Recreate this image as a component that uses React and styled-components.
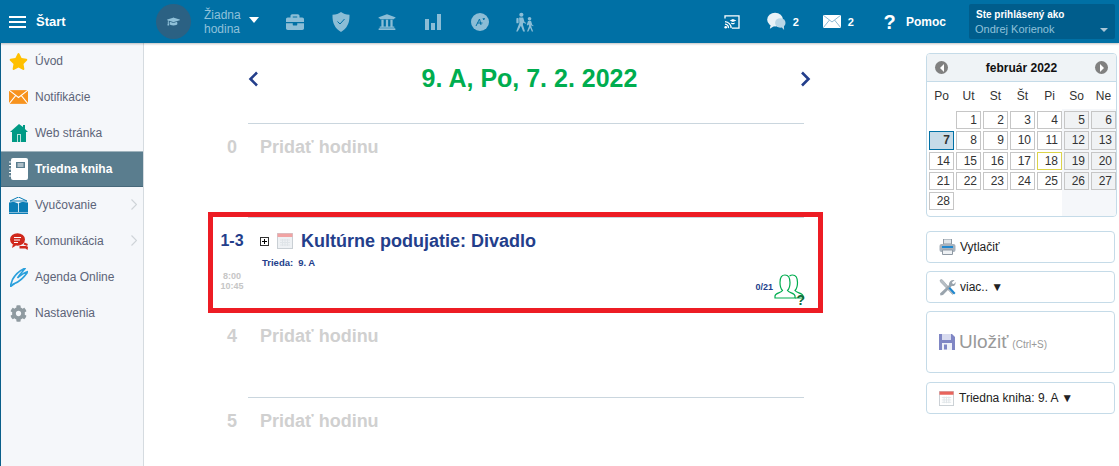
import React from "react"
import styled, { createGlobalStyle } from "styled-components"
import {
  FaStar,
  FaGraduationCap,
  FaBriefcase,
  FaUniversity,
  FaCog,
} from "react-icons/fa"

const GlobalStyle = createGlobalStyle`
  html, body { margin: 0; padding: 0; background: #fff; }
  body { font-family: "Liberation Sans", Arial, sans-serif; }
  * { box-sizing: border-box; }
`

const Page = styled.div`
  width: 1119px;
  height: 466px;
  overflow: hidden;
  display: flex;
  flex-direction: column;
`

/* top bar */
const TopBar = styled.header`
  flex: 0 0 43px;
  display: flex;
  align-items: center;
  background: #0070a5;
  box-shadow: 0 1px 2px rgba(0, 0, 0, 0.25);
  position: relative;
  z-index: 2;
`
const StartBlock = styled.div`
  width: 156px;
  padding-left: 9px;
  display: flex;
  align-items: center;
  gap: 10px;
  color: #fff;
  font-size: 13px;
  font-weight: bold;
`
const Burger = styled.span`
  width: 17px;
  height: 12px;
  border-top: 2px solid #fff;
  border-bottom: 2px solid #fff;
  position: relative;
  &::after {
    content: "";
    position: absolute;
    left: 0;
    right: 0;
    top: 3px;
    height: 2px;
    background: #fff;
  }
`
const CapCircle = styled.div`
  width: 35px;
  height: 35px;
  border-radius: 50%;
  background: #2b6183;
  color: #8fc0d8;
  display: flex;
  align-items: center;
  justify-content: center;
  font-size: 13px;
`
const NoLesson = styled.div`
  margin-left: 13px;
  width: 45px;
  color: #8fc1da;
  font-size: 12px;
  line-height: 14px;
`
const DownArrow = styled.span`
  width: 0;
  height: 0;
  border-left: 5px solid transparent;
  border-right: 5px solid transparent;
  border-top: 6px solid #fff;
  margin-bottom: 4px;
`
const ModuleIcons = styled.div`
  margin-left: 18px;
  display: flex;
  align-items: center;
  color: #8bbdd6;
`
const ModuleIcon = styled.span`
  width: ${p => p.$w}px;
  display: flex;
  justify-content: center;
  font-size: 18px;
`
const RightTools = styled.div`
  margin-left: auto;
  display: flex;
  align-items: center;
  color: #fff;
  font-size: 11px;
  font-weight: bold;
`
const Tool = styled.span`
  display: flex;
  align-items: center;
  gap: ${p => p.$gap || 7}px;
  margin-right: ${p => p.$mr || 0}px;
`
const HelpMark = styled.span`
  font-size: 20px;
  line-height: 20px;
  width: 9px;
  display: flex;
  justify-content: center;
`
const HelpLabel = styled.span`
  font-size: 12px;
`
const UserBox = styled.div`
  width: 146px;
  height: 35px;
  margin-right: 4px;
  padding: 5px 6px 0 7px;
  background: #005d8c;
  border-radius: 2px;
  position: relative;
`
const UserHint = styled.div`
  color: #fff;
  font-size: 10px;
  line-height: 12px;
`
const UserName = styled.div`
  margin: 2px 0 0 -1px;
  color: #8fc1da;
  font-size: 11px;
  font-weight: normal;
  line-height: 13px;
`
const UserCaret = styled.span`
  position: absolute;
  right: 7px;
  bottom: 7px;
  border-left: 4px solid transparent;
  border-right: 4px solid transparent;
  border-top: 4px solid #a9c6d6;
`

/* sidebar */
const Body = styled.div`
  flex: 1;
  display: flex;
  min-height: 0;
`
const Sidebar = styled.nav`
  width: 144px;
  background: #f5f7fa;
  border-left: 1px solid #0a5f8a;
  border-right: 1px solid #d5dbe0;
`
const NavItem = styled.div`
  height: 36px;
  display: flex;
  align-items: center;
  position: relative;
  padding-left: 8px;
  gap: 7px;
  font-size: 12px;
  color: ${p => (p.$active ? "#fff" : "#5c6478")};
  font-weight: ${p => (p.$active ? "bold" : "normal")};
  background: ${p => (p.$active ? "#5a7d8e" : "transparent")};
  ${p => p.$active && "border-top: 1px solid #9fb3bd; border-bottom: 1px solid #47687a;"}
`
const NavIconBox = styled.span`
  width: 19px;
  height: 20px;
  display: flex;
  align-items: center;
  justify-content: center;
  font-size: ${p => p.$size || 19}px;
  color: ${p => p.$color || "inherit"};
`
const NavChevron = styled.svg`
  position: absolute;
  right: 6px;
  top: 12px;
`

/* middle column */
const Main = styled.main`
  flex: 0 0 782px;
  padding-left: 72px;
  position: relative;
`
const DayHeader = styled.div`
  height: 80px;
  width: 595px;
  padding: 0 0 9px 32px;
  display: flex;
  align-items: center;
  justify-content: space-between;
`
const DayTitle = styled.h1`
  margin: 0;
  color: #00ad4f;
  font-size: 25px;
  font-weight: bold;
`
const LessonRow = styled.section`
  display: grid;
  grid-template-columns: 32px 556px;
  height: ${p => p.$h}px;
`
const LessonNumber = styled.div`
  padding-top: 15px;
  text-align: center;
  font-size: ${p => (p.$filled ? 16 : 18)}px;
  font-weight: bold;
  line-height: 18px;
  color: ${p => (p.$filled ? "#233e8b" : "#d0d0d0")};
  white-space: nowrap;
`
const LessonTimes = styled.div`
  margin-top: 21px;
  color: #c6c6c6;
  font-size: 9px;
  line-height: 10px;
`
const LessonBody = styled.div`
  border-top: 1px solid #cad6de;
  padding: 13px 0 0 12px;
  position: relative;
`
const AddLesson = styled.div`
  margin-top: 1px;
  color: #d0d0d0;
  font-size: 18px;
  font-weight: bold;
  line-height: 18px;
`
const LessonTitleRow = styled.div`
  display: flex;
  align-items: center;
  height: 20px;
`
const PlusBox = styled.span`
  width: 9px;
  height: 9px;
  margin-right: 8px;
  border: 1px solid #333;
  position: relative;
  &::before,
  &::after {
    content: "";
    position: absolute;
    background: #000;
  }
  &::before { left: 1px; right: 1px; top: 3px; height: 1px; }
  &::after { top: 1px; bottom: 1px; left: 3px; width: 1px; }
`
const LessonTitle = styled.h2`
  margin: 0 0 0 8px;
  color: #233e8b;
  font-size: 18px;
  font-weight: bold;
`
const LessonClass = styled.div`
  margin: 6px 0 0 2px;
  display: flex;
  gap: 5px;
  color: #233e8b;
  font-size: 9.500px;
  font-weight: bold;
  line-height: 12px;
`
const Attendance = styled.div`
  position: absolute;
  right: -1px;
  top: 56px;
  display: flex;
  align-items: center;
  gap: 1px;
  color: #233e8b;
  font-size: 9px;
  font-weight: bold;
`
const UsersWrap = styled.span`
  position: relative;
  display: flex;
`
const UnknownMark = styled.span`
  position: absolute;
  right: 0;
  bottom: -7px;
  color: #0f6b3a;
  font-size: 14px;
  font-weight: bold;
  line-height: 14px;
`
const RedFrame = styled.div`
  position: absolute;
  left: 64px;
  top: 169px;
  width: 615px;
  height: 101px;
  border: 5px solid #ed1c24;
  pointer-events: none;
`

/* right column */
const Aside = styled.aside`
  width: 193px;
  padding-top: 10px;
`
const Calendar = styled.div`
  width: 191px;
  height: 164px;
  border: 1px solid #c5dbe8;
  border-radius: 4px;
  overflow: hidden;
`
const CalendarHead = styled.div`
  height: 28px;
  padding: 0 8px;
  display: flex;
  align-items: center;
  justify-content: space-between;
  background: #eff3f6;
  border-bottom: 1px solid #c5dbe8;
  color: #111;
  font-size: 12px;
  font-weight: bold;
`
const CalendarNav = styled.span`
  width: 13px;
  height: 13px;
  border-radius: 50%;
  background: #808080;
  display: flex;
  align-items: center;
  justify-content: center;
`
const CalendarBody = styled.div`
  position: relative;
  padding-left: 2px;
`
const WeekendBand = styled.div`
  position: absolute;
  left: 135px;
  right: 0;
  top: 27px;
  height: 110px;
  background: #f5f7fa;
`
const DayNames = styled.div`
  height: 29px;
  padding-bottom: 2px;
  display: grid;
  grid-template-columns: repeat(7, 25px);
  column-gap: 2px;
  align-items: center;
  text-align: center;
  font-size: 12px;
  color: #333;
  position: relative;
`
const DayGrid = styled.div`
  display: grid;
  grid-template-columns: repeat(7, 25px);
  grid-auto-rows: 18.300px;
  gap: 2px;
  position: relative;
`
const DayCell = styled.div`
  grid-column: ${p => p.$col || "auto"};
  border: 1px solid ${p => (p.$today ? "#0070a5" : p.$mark ? "#dcd44a" : "#c6c6c6")};
  background: ${p => (p.$today ? "#c6dbe8" : p.$weekend ? "#f0f2f4" : "#fff")};
  color: #333;
  font-size: 12px;
  font-weight: ${p => (p.$today ? "bold" : "normal")};
  line-height: 16px;
  text-align: right;
  padding-right: 3px;
`
const ActionButton = styled.div`
  width: 189px;
  height: ${p => p.$h || 32}px;
  margin-top: ${p => p.$mt || 8}px;
  padding-left: 12px;
  display: flex;
  align-items: center;
  gap: ${p => p.$gap || 4}px;
  border: 1px solid #c5dbe8;
  border-radius: 4px;
  color: #222;
  font-size: 12px;
  white-space: nowrap;
`
const SaveLabel = styled.span`
  color: #999;
  font-size: 19px;
`
const SaveHint = styled.span`
  color: #999;
  font-size: 10px;
  margin-left: 4px;
`

const CalendarIcon = ({ size = 16, faded }) => (
  <svg width={size} height={size} viewBox="0 0 16 16">
    <rect x="0.5" y="0.5" width="15" height="15" fill={faded ? "#eef1f4" : "#fff"} stroke="#c9cfd4" />
    <rect x="0.5" y="0.5" width="15" height="3.5" fill={faded ? "#f1a3a3" : "#e8645c"} />
    <path d="M3 7h10M3 9.5h10M3 12h10M5.5 6v7M8 6v7M10.5 6v7" stroke="#dfe4e8" strokeWidth="1" />
  </svg>
)

const ShieldIcon = () => (
  <svg width="18" height="20" viewBox="0 0 18 20">
    <path d="M9 0c2 1.600 5 2.600 8.500 2.800C17.800 11 15 16.500 9 20 3 16.500.2 11 .5 2.800 4 2.600 7 1.600 9 0z" fill="currentColor" />
    <path d="M5.500 9.500l2.500 2.500 4.500-5" fill="none" stroke="#0070a5" strokeWidth="1" />
  </svg>
)

const BarsIcon = () => (
  <svg width="16" height="16" viewBox="0 0 16 16" fill="currentColor">
    <rect x="0" y="5" width="4" height="11" />
    <rect x="6" y="9" width="4" height="7" />
    <rect x="12" y="0" width="4" height="16" />
  </svg>
)

const BadgeIcon = () => (
  <svg width="18" height="18" viewBox="0 0 18 18">
    <circle cx="9" cy="9" r="9" fill="currentColor" />
    <path d="M5 13l3.500-7 1.500 6M6.500 10h5M12 5l1 2M14 5.500l-2 1" fill="none" stroke="#0070a5" strokeWidth="1" />
  </svg>
)

const WalkersIcon = () => (
  <svg width="20" height="20" viewBox="0 0 22 21" fill="currentColor">
    <circle cx="7" cy="2.500" r="2.300" />
    <path d="M4.500 5.500h4.500l1.500 5 2 1-.5 1-3-1.200-.3 2.200 2.300 7.500H9l-2.500-6.500L3 21H1.300L4.800 11.500z" />
    <rect x="1.500" y="6" width="2.500" height="6" rx="1" />
    <circle cx="16" cy="7" r="2" />
    <path d="M14.300 9.500h3.400l1.300 4 1.500 1-.6.800-2-1.200.2 2 1.900 4.900h-1.500l-1.800-4.200-2 4.200h-1.500l2.300-6-.6-1.800-1.300 1.200-.7-.6z" />
  </svg>
)

const CastIcon = () => (
  <svg width="18" height="14" viewBox="0 0 18 16">
    <path d="M1 4V1h16v14H9" fill="none" stroke="#fff" strokeWidth="1.500" />
    <path d="M1 7.500a7.500 7.500 0 0 1 7 7.500M1 10.500a4.500 4.500 0 0 1 4 4.500" fill="none" stroke="#fff" strokeWidth="1.500" />
    <circle cx="1.800" cy="14" r="1.500" fill="#fff" />
    <path d="M10 4.500l4 1.700-4 1.700-3.500-1.700zM8 8.500c1.300 1 2.700 1 4 0v1.500c-1.300.8-2.700.8-4 0z" fill="#fff" />
  </svg>
)

const BubblesIcon = () => (
  <svg width="19" height="20" viewBox="0 0 20 20">
    <ellipse cx="8.500" cy="7.500" rx="8.300" ry="7.300" fill="#e9f2f7" />
    <path d="M4 12l-1 5 5-3z" fill="#e9f2f7" />
    <ellipse cx="14" cy="11" rx="5.500" ry="5" fill="#b9d6e6" />
    <path d="M15 15l3 3.500-.2-5z" fill="#b9d6e6" />
  </svg>
)

const MailIcon = ({ bg, line, w = 18, h = 13 }) => (
  <svg width={w} height={h} viewBox="0 0 18 13">
    <rect width="18" height="13" fill={bg} />
    <path d="M0 0l9 7 9-7M0 13l6.500-8M18 13l-6.500-8" fill="none" stroke={line} strokeWidth="1" />
  </svg>
)

const HouseIcon = () => (
  <svg width="18" height="18" viewBox="0 0 18 18">
    <path d="M9 0l4 3V1h2v4l3 3h-2v10H2V8H0z" fill="#009a85" />
    <rect x="7" y="10" width="4" height="8" fill="#b9e3dc" />
    <rect x="8" y="11" width="2" height="7" fill="#009a85" />
  </svg>
)

const NotebookIcon = () => (
  <svg width="19" height="22" viewBox="0 0 19 22">
    <rect x="2" y="0" width="17" height="22" rx="2" fill="#fff" />
    <rect x="7" y="4" width="9" height="6" fill="#5a7d8e" />
    <path d="M8.500 6h6M8.500 8h6" stroke="#fff" strokeWidth="1" />
    <path d="M0 4h3M0 7.500h3M0 11h3M0 14.500h3M0 18h3" stroke="#fff" strokeWidth="1.200" />
  </svg>
)

const BookIcon = () => (
  <svg width="19" height="17" viewBox="0 0 19 17">
    <path d="M9.500 0L18 4H1z" fill="none" stroke="#0b7db5" strokeWidth="1" />
    <path d="M0 5.500c3.500-1 7-.5 9 1 2-1.500 5.500-2 10-1V15H0z" fill="#0b7db5" />
    <rect x="9" y="6" width="1" height="9" fill="#cfe6f2" />
    <rect x="0" y="15.500" width="19" height="1.500" fill="#0b7db5" />
  </svg>
)

const ChatIcon = () => (
  <svg width="18" height="17" viewBox="0 0 18 17">
    <ellipse cx="7.500" cy="6.500" rx="7.500" ry="6.200" fill="#d0281c" />
    <path d="M3 11l-1 4 4-2.500z" fill="#d0281c" />
    <path d="M4 4.500h7M4 7h6M4 9.500h4" stroke="#fff" strokeWidth="1" />
    <path d="M9.500 13h6.500c1.500 0 2 1 2 1.500l-.5 2.500-2-1.500H9.500z" fill="#d0281c" />
    <path d="M14 10.500l3.500 1.500" stroke="#d0281c" strokeWidth="2" />
  </svg>
)

const PenIcon = () => (
  <svg width="18" height="19" viewBox="0 0 18 19">
    <path d="M0 19l2.500-7.500C5 7 9.500 2.500 15.500 0 13.500 2.500 10 6 7.500 10 10.500 7.500 14 4.500 18 3.500 15 8 10 13.500 4.500 15.500z" fill="none" stroke="#2ba0dc" strokeWidth="1.600" />
    <path d="M0 19l3-4 2 1z" fill="#2ba0dc" />
  </svg>
)

const UsersIcon = () => (
  <svg width="31" height="26" viewBox="0 0 31 26">
    <path d="M1 22c0-3 6-3 7.500-5.500C7 15 6 12 6 8.500 6 3 8 1 11 1s5 2 5 7.500c0 3.500-1 6.500-2.500 8C15 19 21 19 21 22v2H1z" fill="#fff" stroke="#00ad4f" strokeWidth="1.200" />
    <path d="M15.500 2c1-.7 2-1 3-1 3 0 5 2 5 7.500 0 3.500-1 6.500-2.500 8 1.500 2.500 8 2.500 8 5.500v2h-8" fill="none" stroke="#00ad4f" strokeWidth="1.200" />
  </svg>
)

const PrinterIcon = () => (
  <svg width="17" height="16" viewBox="0 0 17 16">
    <path d="M4.500 0h8v5h-8z" fill="#dfe4e8" stroke="#8f99a3" />
    <rect x="0.500" y="5" width="16" height="8" rx="2" fill="#a8b2bc" />
    <rect x="3" y="7" width="11" height="2" fill="#1f88d0" />
    <path d="M3.500 11h10v4.500h-10z" fill="#eef1f4" stroke="#8f99a3" />
  </svg>
)

const ToolsIcon = () => (
  <svg width="17" height="17" viewBox="0 0 17 17">
    <path d="M1 1l2-.5 12 13.500-1.500 1.500L1.500 3z" fill="#b7bec4" stroke="#8f99a3" strokeWidth=".5" />
    <path d="M15.500 1.200l-2.500 2 .5 1.500 1.500.3 1.500-2c.6 2.500-1.200 4.500-3.700 4L4 16l-2.500.5L1 14.500 10 6c-.5-3 2.500-5.700 5.500-4.800z" fill="#9aa4ad" />
    <path d="M9.500 9.500l5.500 6 1.500-1.500-5.500-6z" fill="#1f88d0" />
  </svg>
)

const FloppyIcon = () => (
  <svg width="16" height="16" viewBox="0 0 16 16">
    <path d="M0 0h13l3 3v13H0z" fill="#7f86c4" />
    <rect x="3" y="0" width="9" height="6" fill="#d8dbef" />
    <rect x="3" y="9" width="10" height="7" fill="#eef0f8" />
    <rect x="5" y="10.500" width="3" height="5" fill="#7f86c4" />
  </svg>
)

const navItems = [
  { label: "Úvod", icon: <NavIconBox $color="#ffc000"><FaStar /></NavIconBox> },
  { label: "Notifikácie", icon: <NavIconBox><MailIcon bg="#f7931e" line="#fff" w={19} h={14} /></NavIconBox> },
  { label: "Web stránka", icon: <NavIconBox><HouseIcon /></NavIconBox> },
  { label: "Triedna kniha", icon: <NavIconBox><NotebookIcon /></NavIconBox>, active: true },
  { label: "Vyučovanie", icon: <NavIconBox><BookIcon /></NavIconBox>, more: true },
  { label: "Komunikácia", icon: <NavIconBox><ChatIcon /></NavIconBox>, more: true },
  { label: "Agenda Online", icon: <NavIconBox><PenIcon /></NavIconBox> },
  { label: "Nastavenia", icon: <NavIconBox $color="#8f9aa0" $size={17}><FaCog /></NavIconBox> },
]

const days = Array.from({ length: 28 }, (_, i) => i + 1)

const Chevron = ({ flip }) => (
  <svg width="11" height="16" viewBox="0 0 11 16">
    <path d={flip ? "M2 1.500L8.500 8 2 14.500" : "M9 1.500L2.500 8 9 14.500"} fill="none" stroke="#233e8b" strokeWidth="2.600" />
  </svg>
)

const MonthArrow = ({ flip }) => (
  <CalendarNav>
    <svg width="6" height="8" viewBox="0 0 6 8">
      <path d={flip ? "M1 0l4 4-4 4z" : "M5 0L1 4l4 4z"} fill="#fff" />
    </svg>
  </CalendarNav>
)

const EmptyLesson = ({ number, height }) => (
  <LessonRow $h={height}>
    <LessonNumber>{number}</LessonNumber>
    <LessonBody>
      <AddLesson>Pridať hodinu</AddLesson>
    </LessonBody>
  </LessonRow>
)

const App = () => (
  <Page>
    <GlobalStyle />
    <TopBar>
      <StartBlock>
        <Burger />
        Štart
      </StartBlock>
      <CapCircle>
        <FaGraduationCap />
      </CapCircle>
      <NoLesson>Žiadna hodina</NoLesson>
      <DownArrow />
      <ModuleIcons>
        <ModuleIcon $w={36}><FaBriefcase /></ModuleIcon>
        <ModuleIcon $w={56}><ShieldIcon /></ModuleIcon>
        <ModuleIcon $w={36}><FaUniversity /></ModuleIcon>
        <ModuleIcon $w={56}><BarsIcon /></ModuleIcon>
        <ModuleIcon $w={38}><BadgeIcon /></ModuleIcon>
        <ModuleIcon $w={52}><WalkersIcon /></ModuleIcon>
      </ModuleIcons>
      <RightTools>
        <Tool $mr={26}><CastIcon /></Tool>
        <Tool $mr={24}><BubblesIcon /> 2</Tool>
        <Tool $mr={31}><MailIcon bg="#fff" line="#8fb9d2" /> 2</Tool>
        <Tool $gap={12} $mr={23}>
          <HelpMark>?</HelpMark>
          <HelpLabel>Pomoc</HelpLabel>
        </Tool>
        <UserBox>
          <UserHint>Ste prihlásený ako</UserHint>
          <UserName>Ondrej Korienok</UserName>
          <UserCaret />
        </UserBox>
      </RightTools>
    </TopBar>
    <Body>
      <Sidebar>
        {navItems.map(item => (
          <NavItem key={item.label} $active={item.active}>
            {item.icon}
            {item.label}
            {item.more && (
              <NavChevron width="6" height="11" viewBox="0 0 6 11">
                <path d="M.5.500l5 5-5 5" fill="none" stroke="#cfd4d8" strokeWidth="1.200" />
              </NavChevron>
            )}
          </NavItem>
        ))}
      </Sidebar>
      <Main>
        <DayHeader>
          <Chevron />
          <DayTitle>9. A, Po, 7. 2. 2022</DayTitle>
          <Chevron flip />
        </DayHeader>
        <EmptyLesson number="0" height={94} />
        <LessonRow $h={95}>
          <LessonNumber $filled>
            1-3
            <LessonTimes>
              8:00
              <br />
              10:45
            </LessonTimes>
          </LessonNumber>
          <LessonBody>
            <LessonTitleRow>
              <PlusBox />
              <CalendarIcon faded />
              <LessonTitle>Kultúrne podujatie: Divadlo</LessonTitle>
            </LessonTitleRow>
            <LessonClass>
              <span>Trieda:</span>
              <span>9. A</span>
            </LessonClass>
            <Attendance>
              0/21
              <UsersWrap>
                <UsersIcon />
                <UnknownMark>?</UnknownMark>
              </UsersWrap>
            </Attendance>
          </LessonBody>
        </LessonRow>
        <EmptyLesson number="4" height={85} />
        <EmptyLesson number="5" height={85} />
        <RedFrame />
      </Main>
      <Aside>
        <Calendar>
          <CalendarHead>
            <MonthArrow />
            február 2022
            <MonthArrow flip />
          </CalendarHead>
          <CalendarBody>
            <WeekendBand />
            <DayNames>
              {["Po", "Ut", "St", "Št", "Pi", "So", "Ne"].map(d => (
                <span key={d}>{d}</span>
              ))}
            </DayNames>
            <DayGrid>
              {days.map(d => (
                <DayCell
                  key={d}
                  $col={d === 1 ? 2 : undefined}
                  $today={d === 7}
                  $mark={d === 18}
                  $weekend={d % 7 === 5 || d % 7 === 6}
                >
                  {d}
                </DayCell>
              ))}
            </DayGrid>
          </CalendarBody>
        </Calendar>
        <ActionButton $mt={14}>
          <PrinterIcon />
          Vytlačiť
        </ActionButton>
        <ActionButton>
          <ToolsIcon />
          viac.. ▼
        </ActionButton>
        <ActionButton $h={62}>
          <FloppyIcon />
          <span>
            <SaveLabel>Uložiť</SaveLabel>
            <SaveHint>(Ctrl+S)</SaveHint>
          </span>
        </ActionButton>
        <ActionButton $mt={9} $gap={5}>
          <CalendarIcon size={15} />
          Triedna kniha: 9. A ▼
        </ActionButton>
      </Aside>
    </Body>
  </Page>
)

export default App
